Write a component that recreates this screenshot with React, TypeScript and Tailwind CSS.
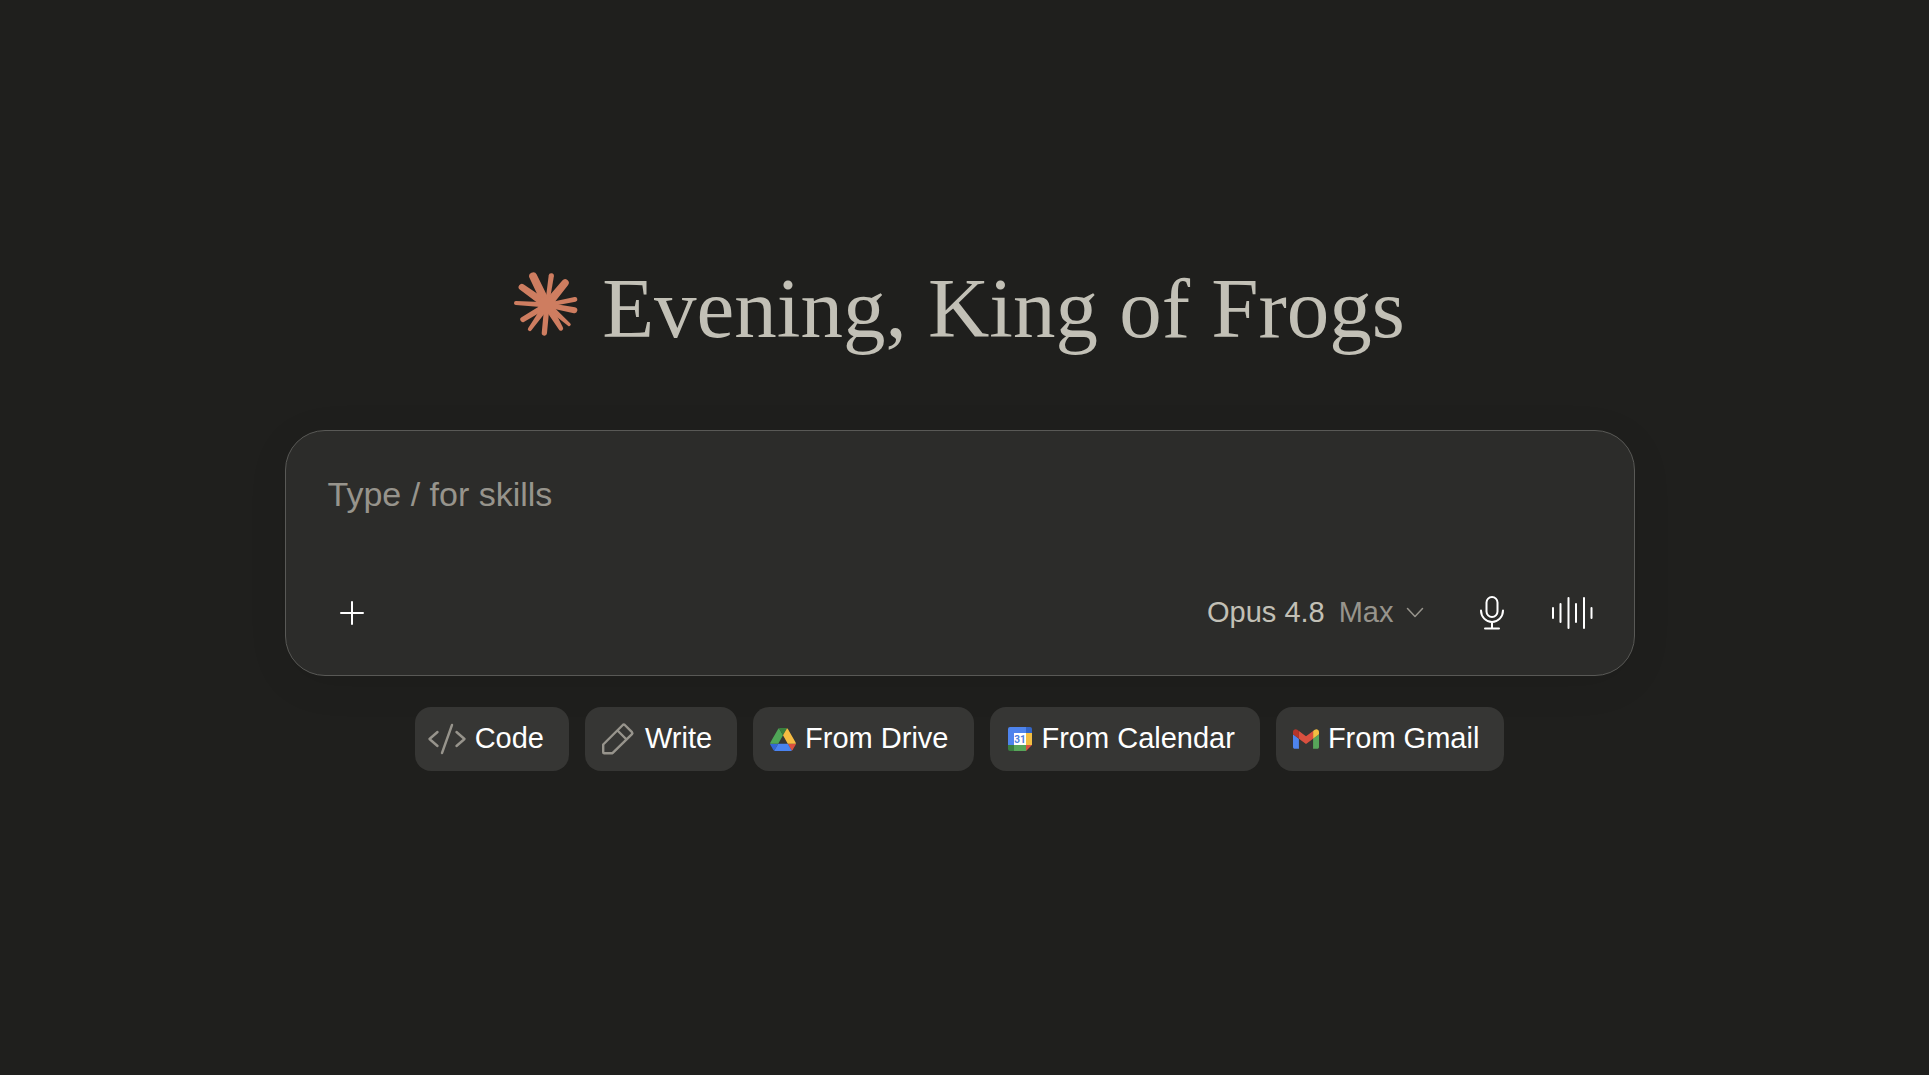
import React, { useState } from 'react';

// tip x, tip y, tip radius, base radius
const rays: [number, number, number, number][] = [
  [94, 51, 12, 13],
  [149, 50, 8, 6],
  [191, 71, 11, 13],
  [221, 121, 7, 6],
  [219, 154, 9, 7],
  [203, 197, 5, 10],
  [178, 209, 7, 12],
  [128, 223, 8, 8],
  [84, 211, 6, 10],
  [63, 182, 8, 9],
  [42, 132, 6, 8],
  [60, 84, 10, 12],
];

const rayPath = ([x, y, tip, base]: [number, number, number, number]) => {
  const cx = 136;
  const cy = 138;
  const len = Math.hypot(x - cx, y - cy);
  const nx = -(y - cy) / len;
  const ny = (x - cx) / len;
  return `M${cx + nx * base} ${cy + ny * base}L${x + nx * tip} ${y + ny * tip}A${tip} ${tip} 0 0 0 ${x - nx * tip} ${y - ny * tip}L${cx - nx * base} ${cy - ny * base}Z`;
};

function Starburst() {
  return (
    <svg viewBox="36 38 194 194" className="size-16 shrink-0 fill-[#ce7d60]" aria-hidden="true">
      {rays.map((ray) => (
        <path key={`${ray[0]}-${ray[1]}`} d={rayPath(ray)} />
      ))}
      <circle cx="136" cy="138" r="27" />
    </svg>
  );
}

function CodeIcon() {
  return (
    <svg viewBox="0 0 40 40" className="size-10 fill-none stroke-[#97948c]" strokeWidth="2.4" strokeLinecap="round" strokeLinejoin="round" aria-hidden="true">
      <path d="M10.5 13 2.500 20l8 7M29.5 13l8 7-8 7M25 6 15 34" />
    </svg>
  );
}

function PencilIcon() {
  return (
    <svg viewBox="0 0 40 40" className="size-10 fill-none stroke-[#97948c]" strokeWidth="2.4" strokeLinecap="round" strokeLinejoin="round" aria-hidden="true">
      <path d="M6.2 25.5 25.8 6a1.5 1.500 0 0 1 2 0l7.200 7.200a1.500 1.500 0 0 1 0 2L15.500 34.200H7.200a1 1 0 0 1-1-1zM20.500 11.500l9 9" />
    </svg>
  );
}

function DriveIcon() {
  return (
    <svg viewBox="0 0 87.3 78" className="h-[23px] w-7" aria-hidden="true">
      <path fill="#3367d6" d="m6.6 66.85 3.85 6.65c.8 1.4 1.95 2.5 3.3 3.3l13.75-23.8h-27.5c0 1.55.4 3.1 1.2 4.5z" />
      <path fill="#4fa657" d="m43.65 25-13.75-23.8c-1.35.8-2.5 1.9-3.3 3.3l-25.4 44a9.06 9.06 0 0 0-1.2 4.5h27.5z" />
      <path fill="#d9503f" d="m73.55 76.8c1.35-.8 2.5-1.9 3.3-3.3l1.6-2.75 7.65-13.25c.8-1.4 1.2-2.95 1.2-4.5h-27.5l5.85 11.5z" />
      <path fill="#3a7f3d" d="m43.65 25 13.75-23.8c-1.35-.8-2.9-1.2-4.5-1.2h-18.5c-1.6 0-3.15.45-4.5 1.2z" />
      <path fill="#4a83f0" d="m59.8 53h-32.3l-13.75 23.8c1.35.8 2.9 1.2 4.5 1.2h50.8c1.6 0 3.15-.45 4.5-1.2z" />
      <path fill="#f6bc42" d="m73.4 26.5-12.7-22c-.8-1.4-1.95-2.5-3.3-3.3l-13.75 23.8 16.15 28h27.45c0-1.55-.4-3.1-1.2-4.5z" />
    </svg>
  );
}

function CalendarIcon() {
  return (
    <svg viewBox="0 0 24 24" className="mx-0.5 size-6" aria-hidden="true">
      <path fill="#4e84ed" d="M2 0h16v6H6v12H0V2a2 2 0 0 1 2-2z" />
      <path fill="#3465c4" d="M18 0h4a2 2 0 0 1 2 2v4h-6z" />
      <path fill="#f3be42" d="M18 6h6v12h-6z" />
      <path fill="#57a55a" d="M6 18h12v6H6z" />
      <path fill="#3a7d40" d="M0 18h6v6H2a2 2 0 0 1-2-2z" />
      <path fill="#d9503f" d="M18 18h6l-6 6z" />
      <path fill="#fff" d="M6 6h12v12H6z" />
      <text x="12" y="15.5" textAnchor="middle" fontSize="10" fontWeight="700" fontFamily="Roboto, sans-serif" fill="#4e7fdc">31</text>
    </svg>
  );
}

function GmailIcon() {
  return (
    <svg viewBox="52 42 88 66" className="mx-px h-5 w-[26px]" aria-hidden="true">
      <path fill="#4e84ed" d="M58 108h14V74L52 59v43c0 3.32 2.69 6 6 6" />
      <path fill="#57a55a" d="M120 108h14c3.32 0 6-2.69 6-6V59l-20 15" />
      <path fill="#f3be42" d="M120 48v26l20-15v-8c0-7.42-8.47-11.65-14.4-7.2" />
      <path fill="#d9503f" d="M72 74V48l24 18 24-18v26L96 92" />
      <path fill="#b5352b" d="M52 51v8l20 15V48l-5.6-4.2c-5.94-4.45-14.4-.22-14.4 7.2" />
    </svg>
  );
}

const suggestions = [
  { label: 'Code', icon: <CodeIcon />, padding: 'pl-3' },
  { label: 'Write', icon: <PencilIcon />, padding: 'pl-3' },
  { label: 'From Drive', icon: <DriveIcon />, padding: 'pl-4' },
  { label: 'From Calendar', icon: <CalendarIcon />, padding: 'pl-4' },
  { label: 'From Gmail', icon: <GmailIcon />, padding: 'pl-4' },
];

export default function App() {
  const [message, setMessage] = useState('');

  return (
    <main className="flex min-h-screen flex-col items-center bg-[#1f1f1d] pt-[260px] pr-2.5 font-['Liberation_Sans',Arial,sans-serif]">
      {/* Greeting */}
      <div className="flex items-start gap-6">
        <div className="pt-3">
          <Starburst />
        </div>
        <h1 className="font-['Liberation_Serif','Times_New_Roman',serif] text-[85px] leading-[96px] text-[#c2c0b6]">
          Evening, King of Frogs
        </h1>
      </div>

      {/* Composer */}
      <form
        onSubmit={(e) => e.preventDefault()}
        className="mt-[74px] w-full max-w-[1350px] rounded-[40px] border border-[#595956] bg-[#2c2c2a] pt-[42px] pr-[30px] pb-[30px] pl-[34px] shadow-[0_8px_40px_rgba(0,0,0,0.08)]"
      >
        <textarea
          aria-label="Message"
          placeholder="Type / for skills"
          rows={1}
          value={message}
          onChange={(e) => setMessage(e.target.value)}
          className="block h-[108px] w-full resize-none bg-transparent px-2 text-[34px] leading-[42px] text-white outline-none placeholder:text-[#97948c]"
        />
        <div className="flex items-center gap-4">
          <button type="button" aria-label="Add files" className="mr-auto flex size-16 items-center justify-center">
            <svg viewBox="0 0 26 26" className="size-[26px] stroke-white stroke-2" strokeLinecap="round" aria-hidden="true">
              <path d="M13 2v22M2 13h22" />
            </svg>
          </button>
          <button type="button" className="flex h-16 items-center px-5 text-[29px]">
            <span className="text-[#c2c0b6]">Opus 4.8</span>
            <span className="ml-3.5 text-[#97948c]">Max</span>
            <svg viewBox="0 0 18 12" className="ml-3 h-3 w-[18px] fill-none stroke-[#97948c]" strokeWidth="1.5" strokeLinecap="round" strokeLinejoin="round" aria-hidden="true">
              <path d="m1.5 1.5 7.5 8 7.5-8" />
            </svg>
          </button>
          <button type="button" aria-label="Dictate" className="flex size-16 items-center justify-center">
            <svg viewBox="0 0 26 34" className="h-[34px] w-[26px] fill-none stroke-white stroke-2" strokeLinecap="round" aria-hidden="true">
              <rect x="7.5" y="1" width="11" height="20" rx="5.5" />
              <path d="M2 14.5a11 11.5 0 0 0 22 0M13 26v6.5M6 32.5h14" />
            </svg>
          </button>
          <button type="button" aria-label="Voice mode" className="flex size-16 items-center justify-center">
            <svg viewBox="0 0 42 34" className="h-[34px] w-[42px] stroke-white stroke-2" strokeLinecap="round" aria-hidden="true">
              <path d="M2 12v10M9.5 8v18M17.5 2v30M25 8v18M33 2v30M40.5 12v10" />
            </svg>
          </button>
        </div>
      </form>

      {/* Suggestions */}
      <div className="mt-[31px] flex flex-wrap justify-center gap-4">
        {suggestions.map((item) => (
          <button
            key={item.label}
            type="button"
            className={`flex h-16 items-center gap-2 rounded-2xl bg-[#363634] pr-[25px] text-[29px] text-white ${item.padding}`}
          >
            {item.icon}
            {item.label}
          </button>
        ))}
      </div>
    </main>
  );
}
